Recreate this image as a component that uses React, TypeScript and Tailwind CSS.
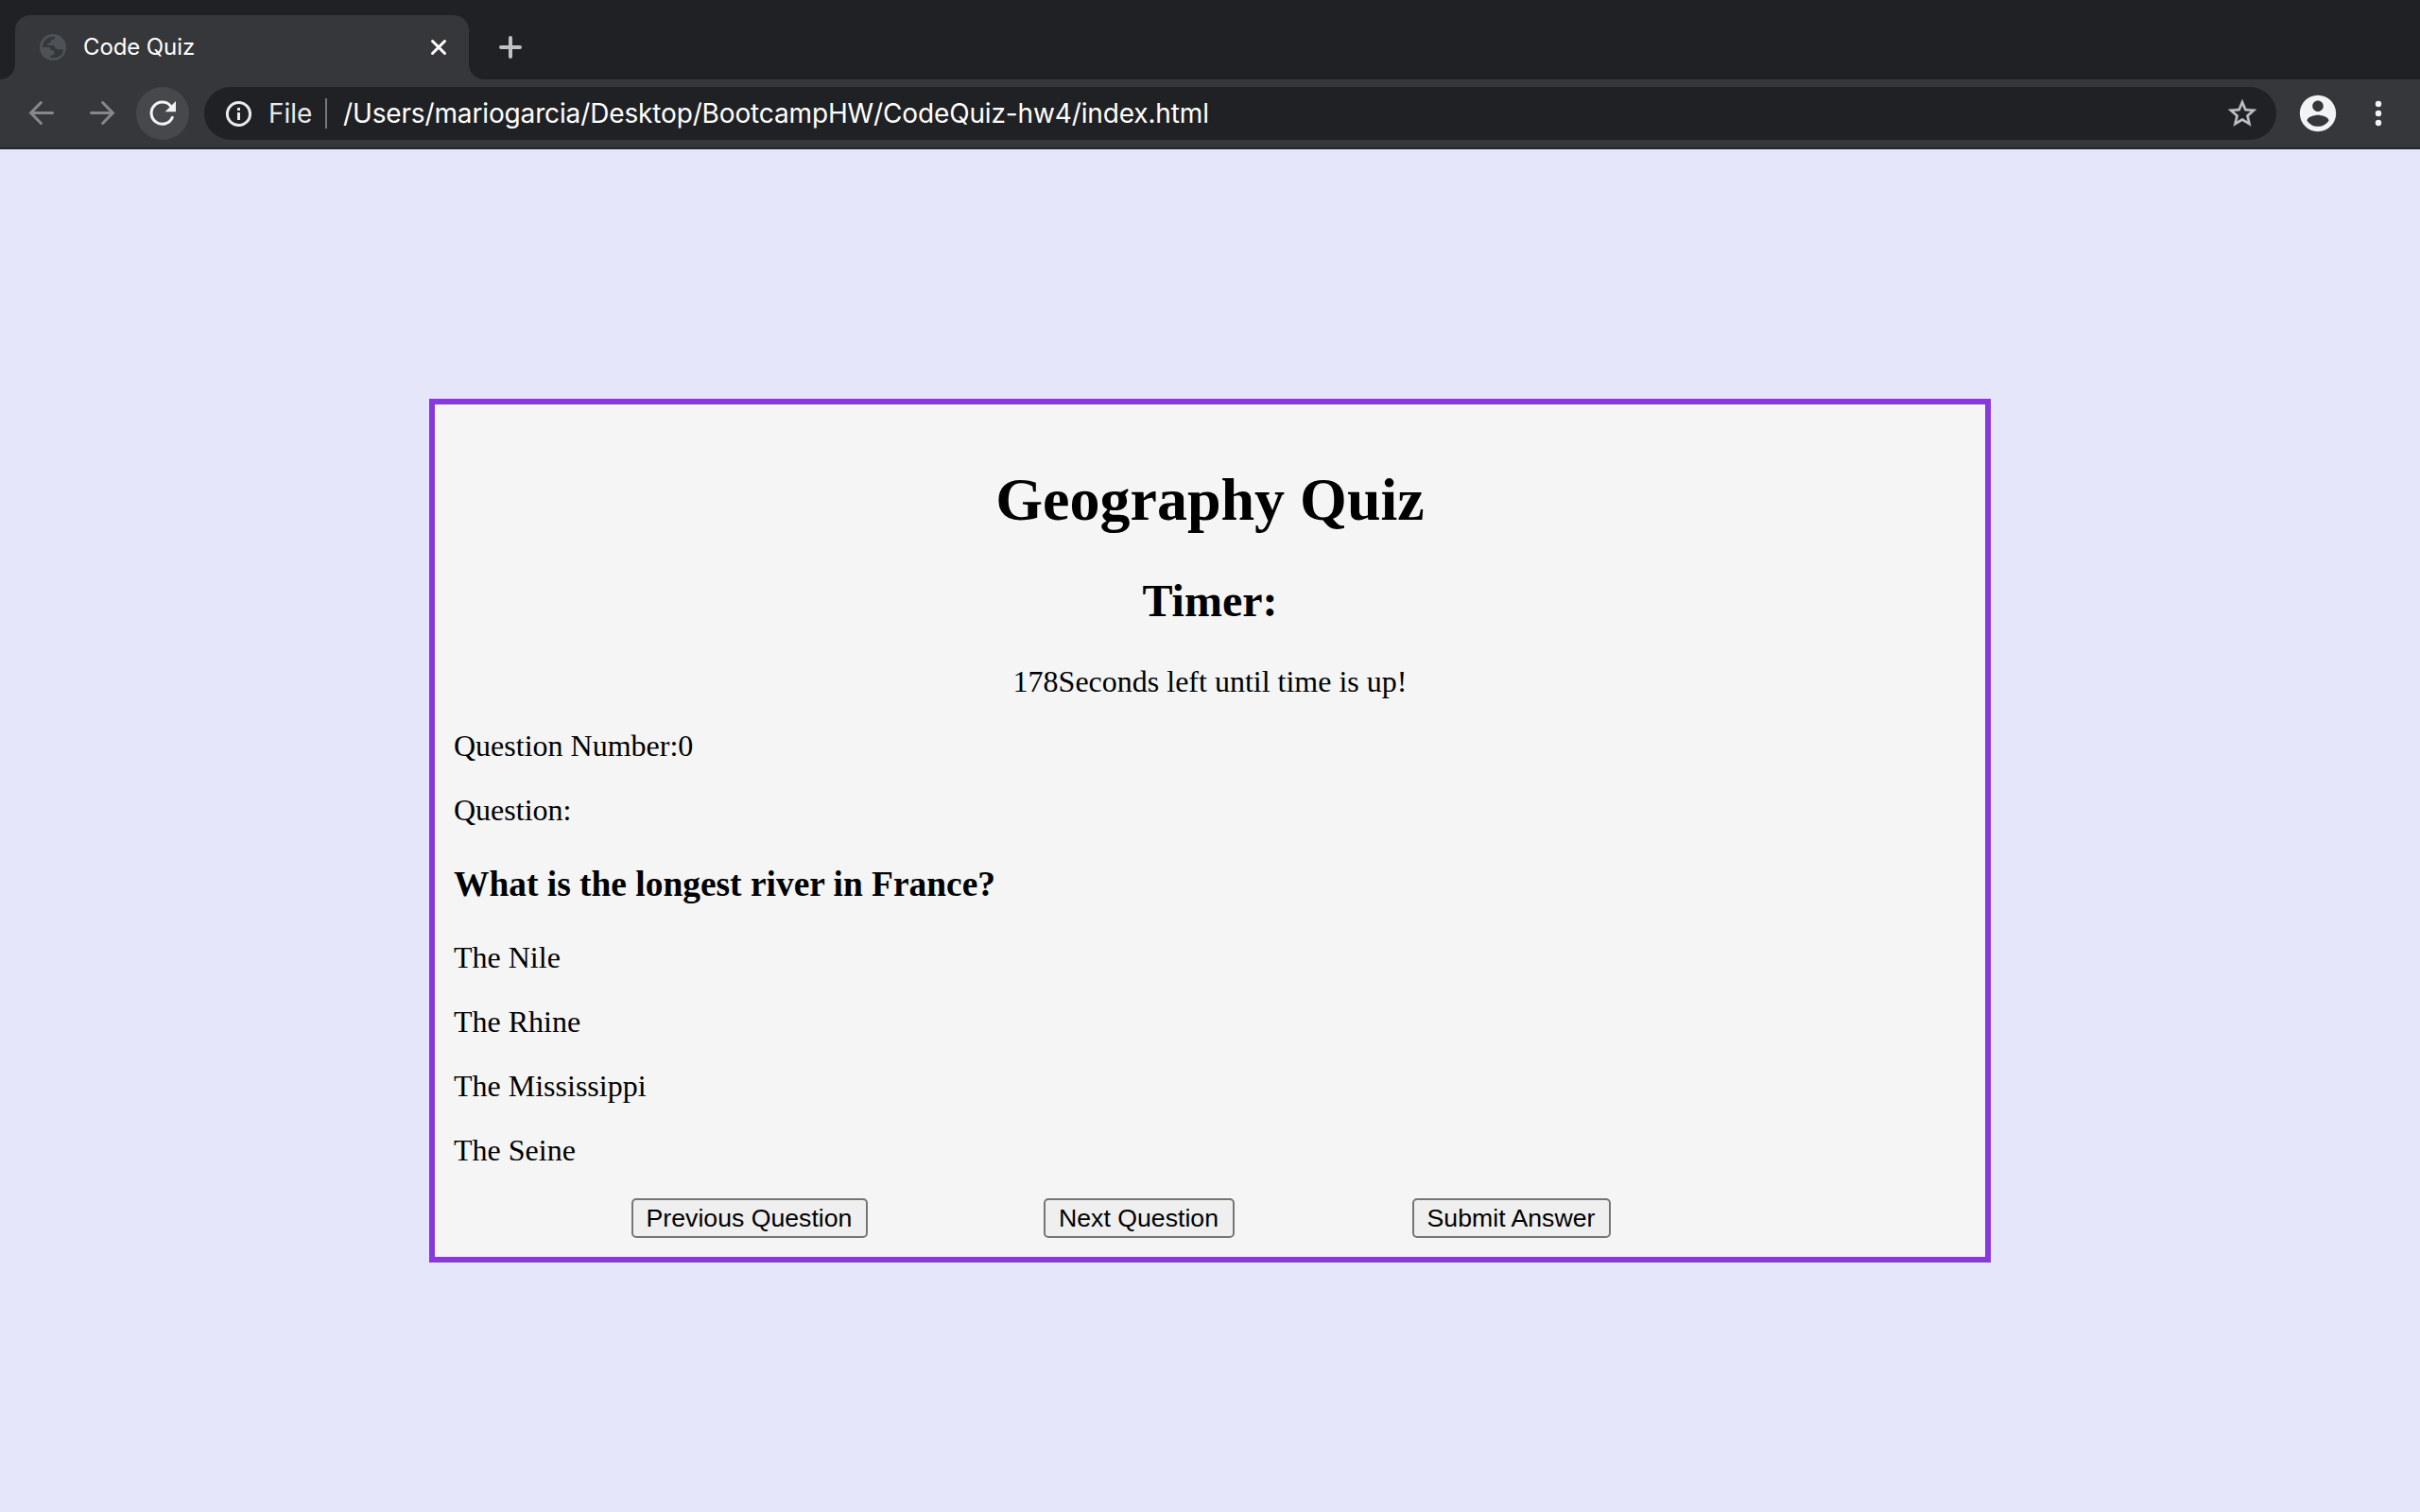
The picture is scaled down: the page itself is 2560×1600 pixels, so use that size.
import type { ReactNode } from "react";

function GlobeIcon() {
  return (
    <svg className="size-7 shrink-0" viewBox="0 0 28 28" fill="none">
      <circle cx="14" cy="14" r="14" fill="#4c5257" />
      <path
        d="M2.9 14c0-5 3.200-9.600 8.200-10.800 1.800-.4 3.700-.3 5.400.2-.2 1.800-1.200 2.300-3 2.500-1.500.2-1.900.9-1.900 2.200 0 1.500-1.200 1.600-2.600 1.900-.9.200-1 1-.8 1.900h5.300c1.800 0 2.500 1 2.500 2.600 1.800.1 2 .9 2 1.700h7c-.3 4.400-3.400 7.900-7.500 8.800-2 .5-4.400.4-6.300-.3v-2.500h2.200c1.400 0 1.800-.8 1.800-2 0-1.500-.4-2.900-2.100-2.900-1.600 0-2.300-1-2.300-3.300z"
        fill="#36373b"
      />
      <path
        d="M3 14.100h7.700c0 2.300.7 3.400 2.400 3.400 1.700.1 2.200 1.200 2.200 2.700 0 1.300-.6 2-1.900 2h-2.300v2.700C6.500 23.700 3 19.600 3 14.100z"
        fill="#4c5257"
      />
    </svg>
  );
}

function CloseIcon() {
  return (
    <svg className="size-8 shrink-0" viewBox="0 0 32 32" fill="none" stroke="#fff" strokeWidth="3" strokeLinecap="round">
      <path d="M9.500 9.500l13 13M22.500 9.500l-13 13" />
    </svg>
  );
}

function PlusIcon() {
  return (
    <svg className="size-8 shrink-0" viewBox="0 0 32 32" fill="none" stroke="#bdc1c6" strokeWidth="4" strokeLinecap="round">
      <path d="M16 6v20M6 16h20" />
    </svg>
  );
}

function ArrowIcon({ className = "" }: { className?: string }) {
  return (
    <svg
      className={`size-8 shrink-0 ${className}`}
      viewBox="0 0 32 32"
      fill="none"
      stroke="#87888b"
      strokeWidth="3"
      strokeLinecap="round"
      strokeLinejoin="miter"
    >
      <path d="M27.500 15.500H4.800M15.400 4.500L4.600 15.500l10.800 11" />
    </svg>
  );
}

function ReloadIcon() {
  return (
    <svg className="size-8" viewBox="0 0 32 32" fill="none">
      <path d="M26.300 20.400A11.600 11.600 0 1 1 24.300 7.900" stroke="#f1f3f4" strokeWidth="3" strokeLinecap="round" />
      <path d="M30 3v11.300H18.700z" fill="#f1f3f4" />
    </svg>
  );
}

function InfoIcon() {
  return (
    <svg className="size-8 shrink-0" viewBox="0 0 32 32" fill="none">
      <circle cx="16.500" cy="16.500" r="12.100" stroke="#e8eaed" strokeWidth="3" />
      <path d="M15 15h3v8h-3zM15 10h3v3h-3z" fill="#e8eaed" />
    </svg>
  );
}

function StarIcon() {
  return (
    <svg className="size-9 shrink-0" viewBox="0 0 24 24" fill="#bdc1c6" stroke="#bdc1c6" strokeWidth="0.200">
      <path d="M22 9.240l-7.190-.62L12 2 9.190 8.630 2 9.240l5.460 4.730L5.820 21 12 17.270 18.180 21l-1.630-7.030L22 9.240zM12 15.400l-3.760 2.270 1-4.280-3.320-2.880 4.380-.38L12 6.100l1.710 4.040 4.380.38-3.320 2.880 1 4.280L12 15.400z" />
    </svg>
  );
}

function ProfileIcon() {
  return (
    <svg className="size-[46px] shrink-0" viewBox="0 0 24 24" fill="#f1f3f4">
      <path d="M12 2C6.480 2 2 6.480 2 12s4.480 10 10 10 10-4.480 10-10S17.520 2 12 2zm0 3c1.660 0 3 1.340 3 3s-1.340 3-3 3-3-1.340-3-3 1.340-3 3-3zm0 14.200c-2.500 0-4.710-1.280-6-3.220.03-1.990 4-3.080 6-3.080 1.990 0 5.970 1.090 6 3.080-1.290 1.940-3.500 3.220-6 3.220z" />
    </svg>
  );
}

function MenuIcon() {
  return (
    <svg className="h-8 w-2 shrink-0" viewBox="0 0 8 32" fill="#f1f3f4">
      <circle cx="4" cy="6" r="3.200" />
      <circle cx="4" cy="16" r="3.200" />
      <circle cx="4" cy="26" r="3.200" />
    </svg>
  );
}

function TabFoot({ className = "" }: { className?: string }) {
  return (
    <svg className={`size-4 shrink-0 self-end ${className}`} viewBox="0 0 16 16" fill="#36373b">
      <path d="M16 0v16H0A16 16 0 0 0 16 0z" />
    </svg>
  );
}

function TabStrip() {
  return (
    <div className="flex h-[84px] items-end bg-[#202125]">
      <TabFoot />
      <div className="flex h-[68px] w-[480px] items-center rounded-t-2xl bg-[#36373b] pr-4 pl-[26px]">
        <GlobeIcon />
        <span className="ml-[18px] flex-1 text-[24px] leading-7 tracking-[-0.1px] text-white">Code Quiz</span>
        <CloseIcon />
      </div>
      <TabFoot className="-scale-x-100" />
      <div className="ml-3 flex h-[68px] items-center">
        <PlusIcon />
      </div>
    </div>
  );
}

function Toolbar() {
  return (
    <div className="flex h-[74px] items-center border-b-2 border-[#252629] bg-[#36373b] pl-7">
      <ArrowIcon />
      <ArrowIcon className="ml-8 -scale-x-100" />
      <div className="ml-5 flex size-14 items-center justify-center rounded-full bg-[#47484b]">
        <ReloadIcon />
      </div>
      <div className="ml-4 flex h-14 w-[2192px] items-center rounded-full bg-[#202125] pr-[18px] pl-5 text-[28px] leading-[34px]">
        <InfoIcon />
        <span className="ml-4 w-[60px] text-[#e8eaed]">File</span>
        <span className="h-8 w-0.5 bg-[#77787b]" />
        <span className="ml-[17px] flex-1 tracking-[-0.140px] whitespace-nowrap text-white">
          /Users/mariogarcia/Desktop/BootcampHW/CodeQuiz-hw4/index.html
        </span>
        <StarIcon />
      </div>
      <div className="ml-[21px]">
        <ProfileIcon />
      </div>
      <div className="ml-[37px]">
        <MenuIcon />
      </div>
    </div>
  );
}

function QuizButton({ className, children }: { className: string; children: ReactNode }) {
  return (
    <button
      className={`h-[42px] rounded-[5px] border-2 border-[#767676] bg-[#efefef] pr-px font-['Liberation_Sans',Arial,sans-serif] text-[26.660px] leading-[30px] whitespace-nowrap ${className}`}
    >
      {children}
    </button>
  );
}

const answers = ["The Nile", "The Rhine", "The Mississippi", "The Seine"];

function QuizCard() {
  return (
    <main className="mt-[264px] ml-[454px] h-[914px] w-[1652px] border-[6px] border-[#8838dd] bg-[#f5f5f5] px-5 font-['Liberation_Serif','Times_New_Roman',serif] text-[32px] leading-9 text-black">
      <h1 className="mt-[65px] text-center text-[64px] leading-[72px] font-bold">Geography Quiz</h1>
      <h2 className="mt-11 text-center text-[48px] leading-[54px] font-bold">Timer:</h2>
      <p className="mt-10 text-center">178Seconds left until time is up!</p>
      <p className="mt-8">Question Number:0</p>
      <p className="mt-8">Question:</p>
      <h3 className="mt-10 text-[37.440px] leading-[42px] font-bold">What is the longest river in France?</h3>
      <div className="mt-[38px] flex flex-col gap-8">
        {answers.map((answer) => (
          <p key={answer}>{answer}</p>
        ))}
      </div>
      <div className="mt-[33px] flex">
        <QuizButton className="ml-[188px] w-[250px]">Previous Question</QuizButton>
        <QuizButton className="ml-[186px] w-[202px]">Next Question</QuizButton>
        <QuizButton className="ml-[188px] w-[210px]">Submit Answer</QuizButton>
      </div>
    </main>
  );
}

export default function App() {
  return (
    <div className="flex h-[1600px] w-[2560px] flex-col overflow-hidden bg-[#e5e6fa] font-['Inter',sans-serif]">
      <TabStrip />
      <Toolbar />
      <QuizCard />
    </div>
  );
}
